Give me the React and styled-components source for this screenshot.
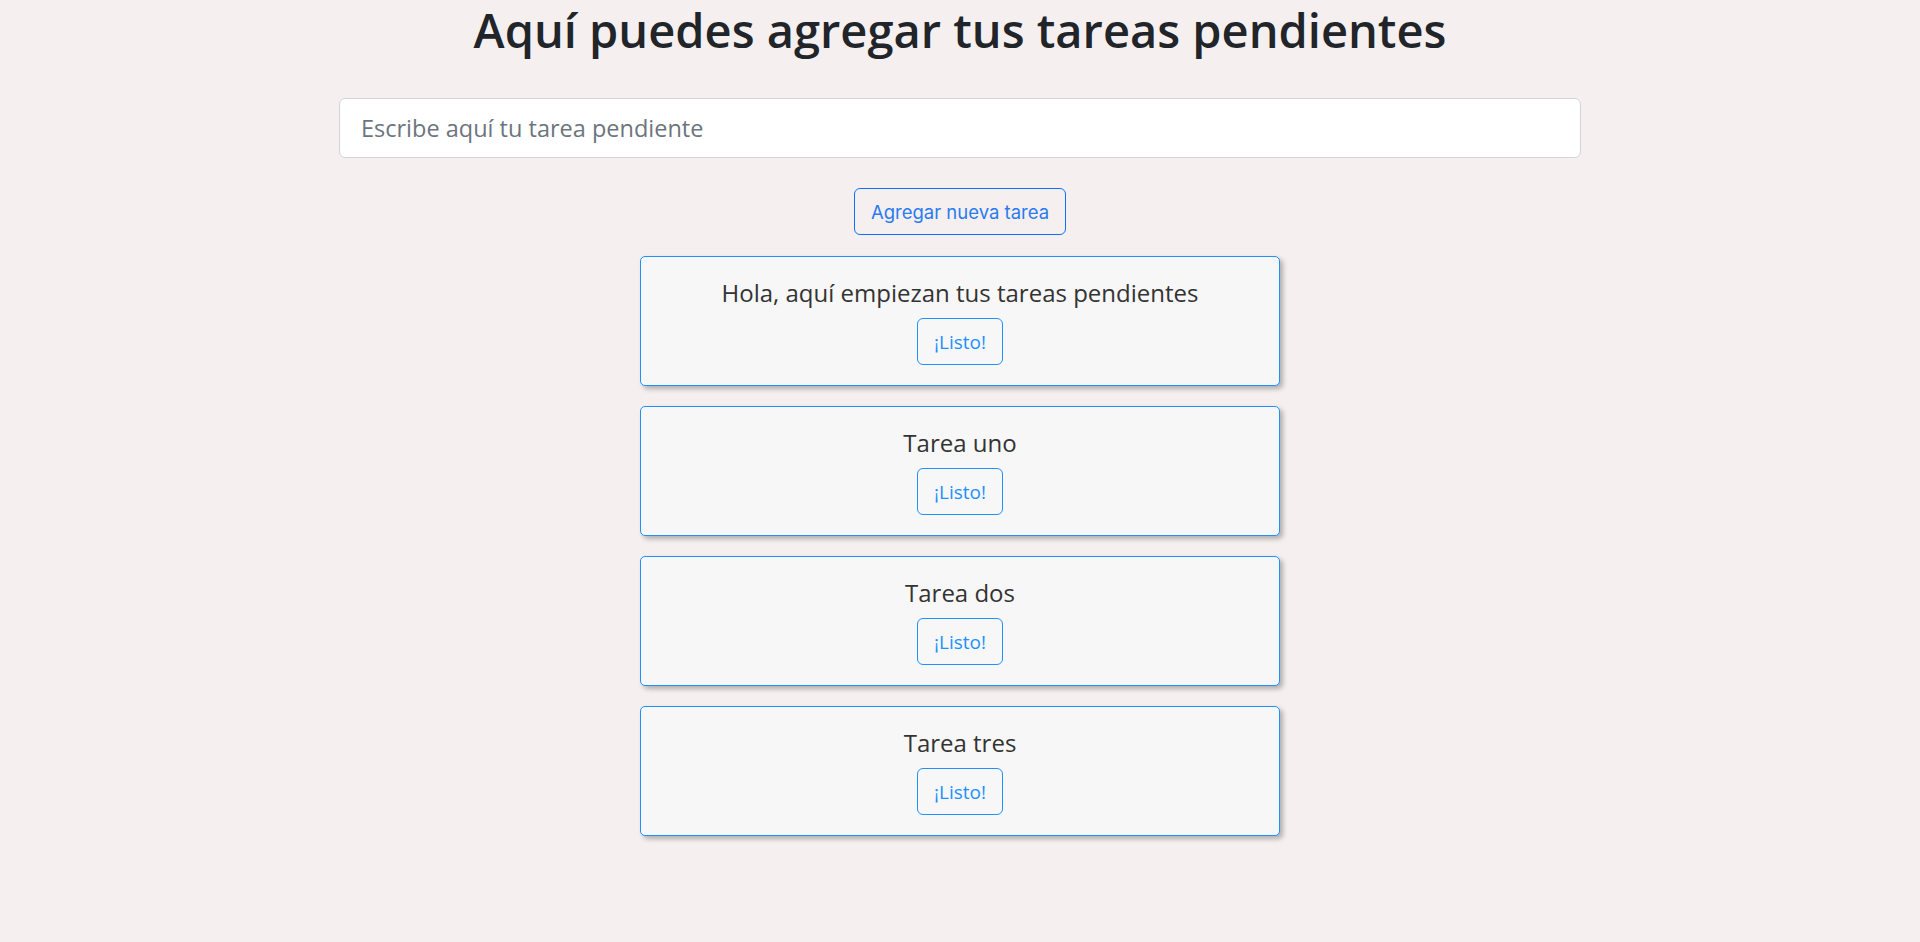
import styled, { createGlobalStyle } from "styled-components";

const GlobalStyle = createGlobalStyle`
  body {
    margin: 0;
    background: #f5eff0;
    font-family: "Open Sans", "Noto Sans", sans-serif;
    color: #212529;
  }
`;

const Page = styled.main`
  display: flex;
  flex-direction: column;
  align-items: center;
  padding-bottom: 40px;
`;

const Heading = styled.h1`
  margin: 0 0 38px;
  font-size: 47px;
  font-weight: 600;
  line-height: 60px;
  color: #212529;
`;

const TaskInput = styled.input`
  box-sizing: border-box;
  width: 1242px;
  height: 60px;
  padding: 0 21px;
  font-family: inherit;
  font-size: 23.5px;
  color: #212529;
  background: #fff;
  border: 1px solid #d3d4da;
  border-radius: 6px;
  outline: none;

  &::placeholder {
    color: #6c757d;
  }
`;

const OutlineButton = styled.button`
  box-sizing: border-box;
  height: 47px;
  padding: 0 16px;
  background: transparent;
  border: 1px solid ${({ $wide }) => ($wide ? "#0d6efd" : "#1e90ff")};
  border-radius: 6px;
  color: ${({ $wide }) => ($wide ? "#2a7bf0" : "#1e90ff")};
  font-family: ${({ $wide }) => ($wide ? "Inter, sans-serif" : "inherit")};
  font-size: ${({ $wide }) => ($wide ? "18.5px" : "19px")};
  cursor: pointer;
`;

const AddRow = styled.div`
  margin-top: 30px;
  margin-bottom: 21px;
`;

const TaskList = styled.ul`
  list-style: none;
  margin: 0;
  padding: 0;
  display: flex;
  flex-direction: column;
  gap: 20px;
  width: 640px;
`;

const TaskCard = styled.li`
  box-sizing: border-box;
  height: 130px;
  padding: 21px 20px 20px;
  display: flex;
  flex-direction: column;
  align-items: center;
  gap: 10px;
  background: #f7f7f7;
  border: 1px solid #1e90ff;
  border-radius: 5px;
  box-shadow: 3px 3px 5px rgba(0, 0, 0, 0.28);
`;

const TaskTitle = styled.h5`
  margin: 0;
  font-size: 24px;
  font-weight: 500;
  line-height: 30px;
  color: #333;
`;

const tasks = [
  "Hola, aquí empiezan tus tareas pendientes",
  "Tarea uno",
  "Tarea dos",
  "Tarea tres",
];

export default function App() {
  return (
    <>
      <GlobalStyle />
      <Page>
        <Heading>Aquí puedes agregar tus tareas pendientes</Heading>
        <TaskInput type="text" placeholder="Escribe aquí tu tarea pendiente" />
        <AddRow>
          <OutlineButton $wide>Agregar nueva tarea</OutlineButton>
        </AddRow>
        <TaskList>
          {tasks.map((task) => (
            <TaskCard key={task}>
              <TaskTitle>{task}</TaskTitle>
              <OutlineButton>¡Listo!</OutlineButton>
            </TaskCard>
          ))}
        </TaskList>
      </Page>
    </>
  );
}
